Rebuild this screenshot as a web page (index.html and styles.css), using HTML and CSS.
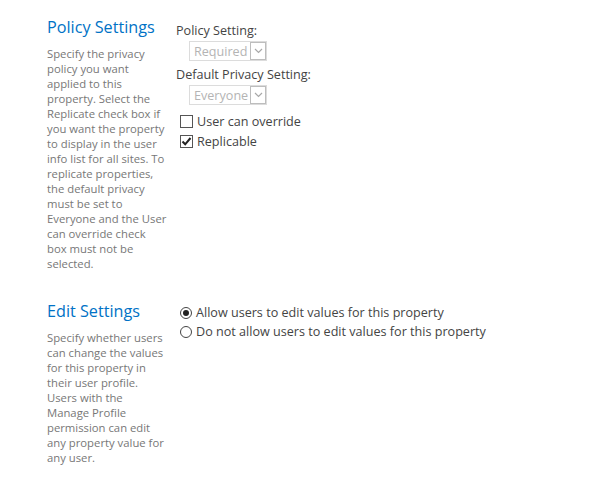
FILE: index.html
```html
<!DOCTYPE html>
<html lang="en">
<head>
    <meta charset="UTF-8">
    <title>Property Settings</title>
    <link rel="stylesheet" href="styles.css">
</head>
<body>

    <div class="section">
        <div class="section-info">
            <h3 class="section-title">Policy Settings</h3>
            <p class="section-desc">Specify the privacy policy you want applied to this property. Select the Replicate check box if you want the property to display in the user info list for all sites. To replicate properties, the default privacy must be set to Everyone and the User can override check box must not be selected.</p>
        </div>
        <div class="section-body">
            <div class="field-label">Policy Setting:</div>
            <div class="select-box">
                <span class="select-text">Required</span>
                <span class="select-arrow"><svg width="9" height="6" viewBox="0 0 9 6"><path d="M1 1 L4.5 4.5 L8 1" fill="none" stroke="#a8a8a8" stroke-width="1.2"/></svg></span>
            </div>
            <div class="field-label">Default Privacy Setting:</div>
            <div class="select-box">
                <span class="select-text">Everyone</span>
                <span class="select-arrow"><svg width="9" height="6" viewBox="0 0 9 6"><path d="M1 1 L4.5 4.5 L8 1" fill="none" stroke="#a8a8a8" stroke-width="1.2"/></svg></span>
            </div>
            <div class="check-row">
                <span class="check"></span>
                <span>User can override</span>
            </div>
            <div class="check-row">
                <span class="check"><svg width="11" height="11" viewBox="0 0 11 11"><path d="M1.5 5.5 L4.2 8.3 L9.5 2" fill="none" stroke="#222" stroke-width="2"/></svg></span>
                <span>Replicable</span>
            </div>
        </div>
    </div>

    <div class="section section-edit">
        <div class="section-info">
            <h3 class="section-title">Edit Settings</h3>
            <p class="section-desc">Specify whether users can change the values for this property in their user profile. Users with the Manage Profile permission can edit any property value for any user.</p>
        </div>
        <div class="section-body">
            <div class="radio-row">
                <span class="radio radio-on"></span>
                <span>Allow users to edit values for this property</span>
            </div>
            <div class="radio-row">
                <span class="radio"></span>
                <span>Do not allow users to edit values for this property</span>
            </div>
        </div>
    </div>

</body>
</html>
```

FILE: styles.css
```css
body {
    font-family: "Open Sans", Arial, sans-serif;
    background-color: #fff;
    color: #444;
    margin: 0;
    padding: 17px 0 0 47px;
}
.section {
    display: grid;
    grid-template-columns: 129px 1fr;
}
.section-edit {
    margin-top: 30px;
}
.section-title {
    margin: 0;
    font-size: 16.2px;
    font-weight: normal;
    color: #0072c6;
    line-height: 20px;
}
.section-desc {
    margin: 9px 0 0;
    font-size: 11.3px;
    line-height: 15px;
    color: #777;
    width: 121px;
}
.section-edit .section-desc {
    width: 119px;
}
.section-body {
    padding-top: 6px;
    font-size: 12.6px;
    color: #444;
}
.section-edit .section-body {
    padding-top: 2px;
}
.field-label {
    line-height: 16px;
}
.select-box {
    display: flex;
    align-items: center;
    justify-content: space-between;
    width: 76px;
    height: 18px;
    margin: 2px 0 6px 13px;
    border: 1px solid #dcdcdc;
    color: #b4b4b4;
    font-size: 12.6px;
}
.select-text {
    padding-left: 4px;
}
.select-arrow {
    display: flex;
    align-items: center;
    justify-content: center;
    width: 14px;
    height: 16px;
    border: 1px solid #bdbdbd;
}
.check-row, .radio-row {
    display: flex;
    align-items: center;
    gap: 4px;
    margin-left: 4px;
    height: 20px;
}
.check {
    display: flex;
    align-items: center;
    justify-content: center;
    width: 11px;
    height: 11px;
    border: 1px solid #555;
}
.radio-row {
    height: 19px;
}
.radio {
    width: 10px;
    height: 10px;
    border: 1px solid #444;
    border-radius: 50%;
    position: relative;
}
.radio-on::after {
    content: "";
    position: absolute;
    left: 2px;
    top: 2px;
    width: 6px;
    height: 6px;
    border-radius: 50%;
    background: #222;
}
```
